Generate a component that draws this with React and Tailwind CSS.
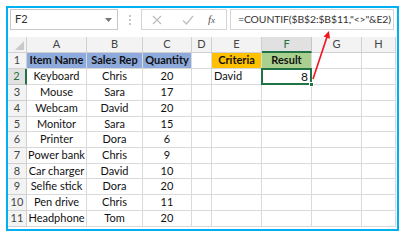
import React from 'react';

const font = { fontFamily: 'Lato, "Liberation Sans", sans-serif' };

const colW = ['w-[60px]', 'w-[56px]', 'w-[49px]', 'w-[20px]', 'w-[50px]', 'w-[50px]', 'w-[50px]', 'w-[34px]'];
const letters = ['A', 'B', 'C', 'D', 'E', 'F', 'G', 'H'];

const rowH = [
  'h-[16px]', 'h-[16px]', 'h-[16px]', 'h-[16px]', 'h-[15px]', 'h-[16px]',
  'h-[16px]', 'h-[15px]', 'h-[16px]', 'h-[16px]', 'h-[16px]',
];

const items = [
  ['Keyboard', 'Chris', '20'],
  ['Mouse', 'Sara', '17'],
  ['Webcam', 'David', '20'],
  ['Monitor', 'Sara', '15'],
  ['Printer', 'Dora', '6'],
  ['Power bank', 'Chris', '9'],
  ['Car charger', 'David', '10'],
  ['Selfie stick', 'Dora', '20'],
  ['Pen drive', 'Chris', '11'],
  ['Headphone', 'Tom', '20'],
];

const Cell = ({ w, className = '', children }) => (
  <div className={`${w} shrink-0 h-full border-r border-b border-[#dadada] flex items-center overflow-visible whitespace-nowrap ${className}`}>
    {children}
  </div>
);

const FormulaBar = () => (
  <div className="flex items-start h-[29px] pt-[1px] pl-[2px] text-[11px] text-[#333]">
    {/* Name box */}
    <div className="w-[108px] h-[21px] border border-[#c8c8c8] flex items-center justify-between pl-[4px] pr-[5px]">
      <span>F2</span>
      <svg width="7" height="4" viewBox="0 0 7 4"><path d="M0 0h7L3.5 4z" fill="#777" /></svg>
    </div>
    {/* Separator dots */}
    <div className="w-[23px] h-[21px] flex flex-col items-center justify-center gap-[2px]">
      <span className="w-[2px] h-[2px] bg-[#c8c8c8]" />
      <span className="w-[2px] h-[2px] bg-[#c8c8c8]" />
      <span className="w-[2px] h-[2px] bg-[#c8c8c8]" />
    </div>
    {/* Cancel / enter / fx */}
    <div className="w-[86px] h-[21px] border border-[#d4d4d4] flex items-center pl-[10px]">
      <svg width="10" height="10" viewBox="0 0 10 10"><path d="M1 1l8 8M9 1l-8 8" stroke="#bdbdbd" strokeWidth="1.2" /></svg>
      <svg className="ml-[20px]" width="12" height="10" viewBox="0 0 12 10"><path d="M1 5.5l3.5 3.5L11 1" stroke="#bdbdbd" strokeWidth="1.2" fill="none" /></svg>
      <span className="ml-[14px] italic text-[11px] text-[#555]" style={{ fontFamily: '"Liberation Serif", serif' }}>
        f<span className="text-[9px]">x</span>
      </span>
    </div>
    {/* Formula */}
    <div className="ml-[3px] w-[164px] h-[21px] border border-[#d4d4d4] flex items-center pl-[7px] whitespace-nowrap overflow-hidden text-[10.4px] tracking-[-0.1px]">
      =COUNTIF($B$2:$B$11,"&lt;&gt;"&amp;E2)
    </div>
  </div>
);

const HeaderRow = () => (
  <div className="flex h-[16px] text-[11px] text-[#444]">
    <div className="w-[19px] shrink-0 h-full bg-[#f3f3f3] border-r border-b border-[#d0d0d0] relative">
      <svg className="absolute right-[2px] bottom-[2px]" width="9" height="9" viewBox="0 0 9 9"><path d="M9 0v9H0z" fill="#c9c9c9" /></svg>
    </div>
    {letters.map((l, i) =>
      l === 'F' ? (
        <div key={l} className={`${colW[i]} shrink-0 h-full bg-[#e1e1e1] border-r border-[#c6c6c6] border-b-2 border-b-[#217346] flex items-center justify-center text-[#217346]`}>
          {l}
        </div>
      ) : (
        <div key={l} className={`${colW[i]} shrink-0 h-full bg-[#f3f3f3] border-r border-b border-[#d0d0d0] flex items-center justify-center`}>
          {l}
        </div>
      )
    )}
  </div>
);

const RowNum = ({ n, active }) =>
  active ? (
    <div className="w-[19px] shrink-0 h-full bg-[#e1e1e1] border-r-2 border-r-[#217346] border-b border-[#c6c6c6] flex items-center justify-center text-[#217346]">
      {n}
    </div>
  ) : (
    <div className="w-[19px] shrink-0 h-full bg-[#f3f3f3] border-r border-b border-[#d0d0d0] flex items-center justify-center text-[#444]">
      {n}
    </div>
  );

const App = () => {
  return (
    <div className="relative w-[407px] h-[240px] bg-white pt-[6px] pl-[6px]" style={font}>
      <div className="w-[393px] h-[225px] border-2 border-[#00b0f0] overflow-hidden bg-white">
        <FormulaBar />
        <HeaderRow />

        {/* Row 1 */}
        <div className={`flex ${rowH[0]} text-[11px] text-[#111]`}>
          <RowNum n={1} />
          <Cell w={colW[0]} className="bg-[#8eaadc] font-bold justify-center">Item Name</Cell>
          <Cell w={colW[1]} className="bg-[#8eaadc] font-bold justify-center">Sales Rep</Cell>
          <Cell w={colW[2]} className="bg-[#8eaadc] font-bold justify-center">Quantity</Cell>
          <Cell w={colW[3]} />
          <Cell w={colW[4]} className="bg-[#ffc000] font-bold justify-center">Criteria</Cell>
          <Cell w={colW[5]} className="bg-[#a9d08e] font-bold justify-center">Result</Cell>
          <Cell w={colW[6]} />
          <Cell w={colW[7]} />
        </div>

        {items.map((r, i) => (
          <div key={i} className={`flex ${rowH[i + 1]} text-[11px] text-[#111]`}>
            <RowNum n={i + 2} active={i === 0} />
            <Cell w={colW[0]} className="justify-center">{r[0]}</Cell>
            <Cell w={colW[1]} className="justify-center">{r[1]}</Cell>
            <Cell w={colW[2]} className="justify-center">{r[2]}</Cell>
            <Cell w={colW[3]} />
            <Cell w={colW[4]} className="pl-[2px]">{i === 0 ? 'David' : ''}</Cell>
            {i === 0 ? (
              <div className="w-[50px] shrink-0 h-full relative border-r border-b border-[#dadada] flex items-center justify-end pr-[3px] text-[12px]">
                8
                <div className="absolute -left-[1px] -top-[1px] -right-[1px] -bottom-[1px] border-2 border-[#217346]" />
                <div className="absolute -right-[3px] -bottom-[3px] w-[5px] h-[5px] bg-[#217346] border border-white" />
              </div>
            ) : (
              <Cell w={colW[5]} />
            )}
            <Cell w={colW[6]} />
            <Cell w={colW[7]} />
          </div>
        ))}
      </div>

      {/* Red arrow overlay */}
      <svg className="absolute left-0 top-0 pointer-events-none" width="407" height="240" viewBox="0 0 407 240">
        <line x1="313" y1="79" x2="327.3" y2="36" stroke="#f0141e" strokeWidth="1.6" />
        <polygon points="329,31 330,38.8 323.6,36.6" fill="#f0141e" />
      </svg>
    </div>
  );
};

export default App;
